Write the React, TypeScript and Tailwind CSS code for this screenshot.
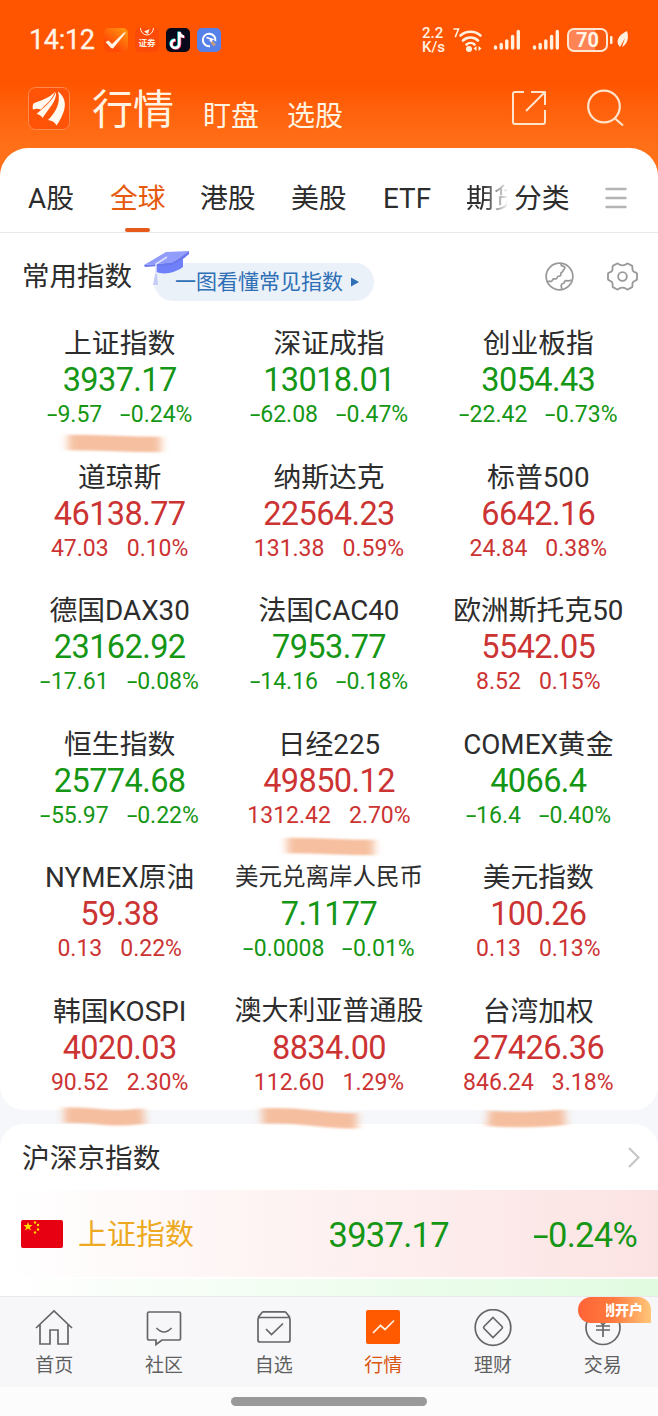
import React from "react";
import clsx from "clsx";

type Quote = {
  name: string;
  price: string;
  change: string;
  percent: string;
  up?: boolean;
  nameClass?: string;
};

const quotes: Quote[] = [
  { name: "上证指数", price: "3937.17", change: "-9.57", percent: "-0.24%" },
  { name: "深证成指", price: "13018.01", change: "-62.08", percent: "-0.47%" },
  { name: "创业板指", price: "3054.43", change: "-22.42", percent: "-0.73%" },
  { name: "道琼斯", price: "46138.77", change: "47.03", percent: "0.10%", up: true },
  { name: "纳斯达克", price: "22564.23", change: "131.38", percent: "0.59%", up: true },
  { name: "标普500", price: "6642.16", change: "24.84", percent: "0.38%", up: true },
  { name: "德国DAX30", price: "23162.92", change: "-17.61", percent: "-0.08%" },
  { name: "法国CAC40", price: "7953.77", change: "-14.16", percent: "-0.18%" },
  { name: "欧洲斯托克50", price: "5542.05", change: "8.52", percent: "0.15%", up: true },
  { name: "恒生指数", price: "25774.68", change: "-55.97", percent: "-0.22%" },
  { name: "日经225", price: "49850.12", change: "1312.42", percent: "2.70%", up: true },
  { name: "COMEX黄金", price: "4066.4", change: "-16.4", percent: "-0.40%" },
  { name: "NYMEX原油", price: "59.38", change: "0.13", percent: "0.22%", up: true },
  { name: "美元兑离岸人民币", price: "7.1177", change: "-0.0008", percent: "-0.01%", nameClass: "text-[23.5px]" },
  { name: "美元指数", price: "100.26", change: "0.13", percent: "0.13%", up: true },
  { name: "韩国KOSPI", price: "4020.03", change: "90.52", percent: "2.30%", up: true },
  { name: "澳大利亚普通股", price: "8834.00", change: "112.60", percent: "1.29%", up: true, nameClass: "text-[27px]" },
  { name: "台湾加权", price: "27426.36", change: "846.24", percent: "3.18%", up: true },
];

const SignalBars: React.FC = () => (
  <svg width="28" height="22" viewBox="0 0 28 22" stroke="#fff1e0" strokeWidth="3.4" strokeLinecap="round">
    <path d="M2.5 18v1M8.2 15.5v3.5M13.8 12v7M19.6 7.5v11.5M25.3 2.5v16.5" />
  </svg>
);

const StatusBar: React.FC = () => (
  <div className="flex h-20 items-center pl-[29px] pr-7">
    <span className="w-[75px] text-[27px] tracking-[-0.3px] text-[#fff4e6] [-webkit-text-stroke:0.3px]">14:12</span>
    <svg width="24" height="24" viewBox="0 0 24 24">
      <defs>
        <linearGradient id="check" x1="1" y1="0" x2="0.4" y2="0.8">
          <stop offset="0" stopColor="#ff9d10" />
          <stop offset="1" stopColor="#ff4a05" />
        </linearGradient>
      </defs>
      <rect width="24" height="24" rx="5" fill="url(#check)" />
      <path d="M1.5 14 4.5 12.5 8 16 20 4.5h2L9 20.5 7 20Z" fill="#fff4e6" />
    </svg>
    <div className="ml-[7px] flex h-6 w-6 flex-col items-center rounded-[5px] bg-[#fc4a08] text-[#fff0e0]">
      <svg width="16" height="9" viewBox="0 0 16 9" fill="none" stroke="currentColor">
        <path d="M1.5 0a6.5 7 0 0 0 13 0" />
        <path d="M5 3.5 10.5 1 9 6Z" fill="currentColor" stroke="none" />
      </svg>
      <span className="text-[8.5px] leading-[12px] font-bold">证券</span>
    </div>
    <svg className="ml-[7px]" width="24" height="24" viewBox="0 0 24 24" fill="none" strokeWidth="2.6">
      <rect width="24" height="24" rx="5" fill="#08091a" />
      <path d="M12.8 4v12a4 4 0 1 1-4-4M12.8 4c.5 3 2 4.5 4.8 4.7" stroke="#25e8e4" transform="translate(-.2 -.5)" />
      <path d="M12.8 4v12a4 4 0 1 1-4-4M12.8 4c.5 3 2 4.5 4.8 4.7" stroke="#fb3360" transform="translate(1.2 .5)" />
      <path d="M12.8 4v12a4 4 0 1 1-4-4M12.8 4c.5 3 2 4.5 4.8 4.7" stroke="#fff" transform="translate(.5 0)" />
    </svg>
    <svg className="ml-[7px]" width="24" height="24" viewBox="0 0 24 24" fill="none">
      <rect width="24" height="24" rx="5" fill="#5681e8" />
      <path d="M13 18.2a6.3 6.3 0 1 1 5.3-5" stroke="#fff" strokeWidth="2" />
      <path d="m9.5 9.5 6 2-2 1 2.5 2.5" stroke="#fff" strokeWidth="1.6" />
      <path d="m14.5 14 3.5 3.5" stroke="#c39a83" strokeWidth="3" />
    </svg>
    <div className="ml-auto flex flex-col text-[15px] leading-[14px] font-medium text-[#fff1e0]">
      <span>2.2</span>
      <span>K/s</span>
    </div>
    <svg className="ml-[7px]" width="31" height="26" viewBox="0 0 31 26" fill="none" stroke="#fff1e0" strokeWidth="2.6" strokeLinecap="round">
      <path d="M2 2h4.5L3.5 9.5" strokeWidth="1.6" />
      <path d="M8.5 8.5a15 15 0 0 1 20 0M11 13.5a11 11 0 0 1 15 0M14.5 17.5a6 6 0 0 1 8 0" />
      <circle cx="17" cy="22" r="3" fill="#fff1e0" stroke="none" />
      <path d="M24.5 19v5l-3-2.5ZM26.5 19v5l3-2.5Z" fill="#fff1e0" stroke="none" />
    </svg>
    <div className="ml-[10px] flex gap-[11px]">
      <SignalBars />
      <SignalBars />
    </div>
    <div className="ml-[7px] flex h-[24px] w-[41px] items-center justify-center rounded-[7px] border-2 border-[#ffe6d0] bg-gradient-to-r from-[#ff8455] from-70% to-[#f95a12] to-70% text-[20px] font-bold text-[#fff4e6]">
      70
    </div>
    <svg className="ml-0.5" width="20" height="20" viewBox="0 0 20 20" fill="#fff1e0">
      <rect y="6" width="2.5" height="8" rx="1" />
      <path d="M17 1c2 6 1 13-5 16l3-9-5 9C5 12 8 5 17 1Z" />
    </svg>
  </div>
);

const TitleBar: React.FC = () => (
  <div className="flex h-[68px] items-start pl-7 pr-[34px] text-[#fff4e2]">
    <svg className="mt-[7px]" width="42" height="43" viewBox="0 0 42 43">
      <rect x=".5" y=".5" width="41" height="42" rx="7" fill="#ff5408" stroke="#ff8a50" />
      <path d="M5.5 16.5C13 13 20 12 27 5c-3 8-9 12-14 17.5-3-1-5.5-1-8 0-.5-2-.5-4 .5-6ZM28 5c1 9-7 16-13.5 26-1-2-3-3.5-6-4C14 22 25 14 28 5ZM30 4.5c7 5 9 14 4.5 23-2 5-4 8-6 11-1.5-3-4-5-8.5-5.5C28 25 33 16 30 4.5Z" fill="#fff9ef" />
    </svg>
    <span className="ml-[22px] text-[41px] leading-[60px]">行情</span>
    <span className="ml-[29px] text-[28px] leading-[73px]">盯盘</span>
    <span className="ml-7 text-[28px] leading-[73px]">选股</span>
    <svg className="ml-auto mt-[11px]" width="34" height="34" viewBox="0 0 34 34" fill="none" stroke="#ffe3cb" strokeWidth="2" strokeLinejoin="round">
      <path d="M12 1H3a2 2 0 0 0-2 2v28a2 2 0 0 0 2 2h28a2 2 0 0 0 2-2V19M19 1h14v13M33 1 14 20" />
    </svg>
    <svg className="ml-[41px] mt-[9px]" width="37" height="38" viewBox="0 0 37 38" fill="none" stroke="#ffe3cb" strokeWidth="2.2">
      <circle cx="17" cy="17.5" r="15.8" />
      <path d="m27.5 29 8.5 7.5" />
    </svg>
  </div>
);

const Tabs: React.FC = () => (
  <div className="flex h-[85px] items-center border-b border-[#e8e9ec] pt-[18px] pr-[31px] pl-7 text-[27.8px] whitespace-nowrap text-[#2d2d2d]">
    <span className="w-[82px]">A股</span>
    <div className="relative w-[90px] text-[#e65a10]">
      全球
      <span className="absolute -bottom-[12px] left-[15px] h-1 w-[25px] rounded-full bg-[#e65a1c]" />
    </div>
    <span className="w-[91px]">港股</span>
    <span className="w-[92px]">美股</span>
    <span className="w-[83px]">ETF</span>
    <span className="w-[41px] overflow-hidden bg-gradient-to-r from-[#2d2d2d] from-40% to-[#eeeeee] bg-clip-text text-transparent">期货</span>
    <span className="ml-[7px]">分类</span>
    <svg className="-mt-[3px] ml-auto" width="22" height="22" viewBox="0 0 22 22" stroke="#b4b4b4" strokeWidth="2.4" strokeLinecap="round">
      <path d="M1.5 2h19M1.5 11h19M1.5 20h19" />
    </svg>
  </div>
);

const SectionHeader: React.FC = () => (
  <div className="flex h-[86px] items-center pr-5 pl-[22px]">
    <h2 className="pt-[2px] text-[27.5px] text-[#2d2d2d]">常用指数</h2>
    <div className="relative mt-3 ml-[22px] flex h-[38px] w-[220px] items-center rounded-full bg-[#eaf1f9] pl-[21px] text-[21px] text-[#2f6fb5]">
      <span className="pt-[2px]">一图看懂常见指数</span>
      <svg className="ml-2" width="8" height="10" viewBox="0 0 8 10" fill="#2f6fb5">
        <path d="M0 .5 8 5 0 9.5Z" />
      </svg>
      <svg className="absolute -top-[13px] -left-[10px]" width="46" height="36" viewBox="0 0 46 36">
        <path d="M12 15v7c8 3 19 1 27-5V9Z" fill="#7080fb" />
        <path d="M0 15 22 2l23-1-17 12Z" fill="#929dfb" />
        <path d="M0 15 28 13 45 1v3C39 10 32 13 28 15L1 17Z" fill="#6a78ee" />
        <path d="M23 7 12 14v12" fill="none" stroke="#dfe3ff" strokeWidth="1.5" />
        <path d="m11 24-2 11h5l-1-11Z" fill="#c5cdf6" />
      </svg>
    </div>
    <svg className="ml-auto" width="29" height="29" viewBox="0 0 30 30" fill="none" stroke="#999" strokeWidth="1.8" strokeLinejoin="round">
      <circle cx="15" cy="15" r="13.8" />
      <path d="M17 1.500c-1 2 0 2.500 2 3s2 2 .5 3.500-1 2.500-2.500 3 .5 3.500-2 3.500-2 .5-2.500 2-2 .5-3.500 1-1 2-2.500 2.500H2.500M17 28.500c1-2-1-3 0-5s2.500-.5 3-2.500 2-2 3.500-1.500 2-1 4-.5" />
    </svg>
    <svg className="ml-[33px]" width="31" height="29" viewBox="0 0 32 30" fill="none" stroke="#999" strokeWidth="1.9" strokeLinejoin="round">
      <path d="M10.5 1.5c1.500 0 2.500 2 5.500 2s4-2 5.500-2l4.500 2.500c.8 1-.5 3 .8 5s3.700 1.500 4.200 3v6c-.5 1.500-3 1-4.200 3s0 4-.8 5l-4.500 2.500c-1.500 0-2.500-2-5.500-2s-4 2-5.500 2L6 26c-.8-1 .5-3-.8-5S1.500 19.500 1 18v-6c.5-1.500 3-1 4.200-3s0-4 .8-5Z" />
      <circle cx="16" cy="15" r="4.5" />
    </svg>
  </div>
);

// Figures are set with a minus sign wider than the font's own hyphen
const Figure: React.FC<{ value: string }> = ({ value }) =>
  value.startsWith("-") ? (
    <span>
      <span className="mr-[0.18em] inline-block origin-left scale-x-165">-</span>
      {value.slice(1)}
    </span>
  ) : (
    <span>{value}</span>
  );

const QuoteCell: React.FC<{ quote: Quote }> = ({ quote }) => (
  <div className="flex h-[133.5px] flex-col items-center whitespace-nowrap">
    <span className={clsx("h-[38px] leading-[39px] text-[#2d2d2d]", quote.nameClass ?? "text-[27.8px]")}>{quote.name}</span>
    <div className={clsx("flex flex-col items-center font-[Roboto]", quote.up ? "text-[#cc3333]" : "text-[#159615]")}>
      <span className="text-[32.5px] leading-[36px] tracking-[-0.6px]">{quote.price}</span>
      <div className="flex gap-[18px] text-[23px] leading-[33px]">
        <Figure value={quote.change} />
        <Figure value={quote.percent} />
      </div>
    </div>
  </div>
);

// Highlighter strokes laid over the quotes
const Marks: React.FC = () => (
  <svg className="pointer-events-none absolute top-0 left-0" width="658" height="1416" viewBox="0 0 658 1416" fill="none" stroke="#f5b48f" strokeOpacity=".85" strokeWidth="15.5">
    <defs>
      <filter id="soft" filterUnits="userSpaceOnUse" x="0" y="0" width="658" height="1416">
        <feGaussianBlur stdDeviation="4 1" />
      </filter>
    </defs>
    <g filter="url(#soft)">
      <path d="M68 442.5q24 0 47 1t46 1" />
      <path d="M287 845.5q22 0 44 1t43 1" />
      <path d="M64 1115q22 0 38 2t42-1" />
      <path d="M262 1116q25-1 50 2t45 3" />
      <path d="M488 1118q16 2 38 1.500t39-2.500" />
    </g>
  </svg>
);

const ShanghaiCard: React.FC = () => (
  <div className="mt-[14px] h-[172px] overflow-hidden rounded-t-[24px] bg-white">
    <div className="flex h-[66px] items-center justify-between pr-[18px] pl-[22px]">
      <h2 className="pt-1 text-[27.7px] text-[#2d2d2d]">沪深京指数</h2>
      <svg width="12" height="21" viewBox="0 0 12 21" fill="none" stroke="#c6c6c6" strokeWidth="2.2">
        <path d="m1 1 9.500 9.500L1 20" />
      </svg>
    </div>
    <div className="flex h-[87px] items-center bg-gradient-to-r from-white to-[#fce3e3] px-[21px]">
      <svg width="42" height="28" viewBox="0 0 42 28">
        <rect width="42" height="28" rx="2" fill="#e60012" />
        <g fill="#ffde00">
          <path d="m7 2 1.200 3.100h3.300L8.900 7.200l1 3.300L7 8.600l-2.900 1.900 1-3.300-2.600-2.100h3.300Z" />
          <circle cx="14" cy="2.5" r="1.2" />
          <circle cx="17" cy="5" r="1.2" />
          <circle cx="17" cy="9.5" r="1.2" />
          <circle cx="14" cy="12.5" r="1.2" />
        </g>
      </svg>
      <span className="ml-[15px] pt-[5px] text-[29px] text-[#eda921]">上证指数</span>
      <div className="ml-auto flex pt-1 font-[Roboto] text-[34.5px] tracking-[-0.7px] text-[#159615]">
        <span>3937.17</span>
        <span className="w-[188px] text-right">
          <Figure value="-0.24%" />
        </span>
      </div>
    </div>
    <div className="mt-[2px] h-[17px] bg-gradient-to-r from-white to-[#e0fbe0]" />
  </div>
);

const navItems = [
  { label: "首页", icon: <path d="M1 19 19 2l18 17M5 15.500V35h10V21h8v14h10V15.500" /> },
  { label: "社区", icon: <path d="M4 3h30a1.500 1.500 0 0 1 1.500 1.500v25A1.500 1.500 0 0 1 34 31H17l-6 4.500V31H4a1.500 1.500 0 0 1-1.500-1.500v-25A1.500 1.500 0 0 1 4 3ZM11.500 19q7.500 8 15 0" /> },
  { label: "自选", icon: <path d="M3 8.500 7 3.500a2 2 0 0 1 1.500-.7h21a2 2 0 0 1 1.500.7l4 5M5 8.500h28a2 2 0 0 1 2 2V31a2 2 0 0 1-2 2H5a2 2 0 0 1-2-2V10.500a2 2 0 0 1 2-2ZM11 20l5.500 5.500L28 14.500" /> },
  { label: "行情", active: true, icon: <><rect x="2" y="1" width="34" height="34" rx="2" fill="#ff5a00" stroke="none" /><path d="m9 24 7.500-7.500 4.500 4 9-9" stroke="#fff3e4" /></> },
  { label: "理财", icon: <><circle cx="19" cy="18.5" r="17.8" /><path d="m19 8.500 9 9a1.500 1.500 0 0 1 0 2l-9 9-9-9a1.500 1.500 0 0 1 0-2Z" /></> },
  { label: "交易", icon: <><circle cx="19" cy="18.5" r="17" /><path d="m13 9 6 7 6-7M12 17h14M12 21h14M19 16v12" /></> },
];

const BottomNav: React.FC = () => (
  <nav className="relative grid h-[91px] grid-cols-6 border-t border-[#e9e9ec] bg-[#f7f7fa]">
    {navItems.map((item) => (
      <div key={item.label} className={clsx("flex flex-col items-center pt-3 pr-px", item.active ? "text-[#d9540f]" : "text-[#5f5f5f]")}>
        <svg width="38" height="38" viewBox="0 0 38 38" fill="none" stroke="#666" strokeWidth="1.7">
          {item.icon}
        </svg>
        <span className="mt-[5px] text-[19px] leading-[28px]">{item.label}</span>
      </div>
    ))}
    <div className="absolute top-0 right-[7px] flex h-[26px] w-[73px] items-center justify-end rounded-full rounded-br-lg bg-gradient-to-r from-[#ff6337] via-[#ff7b3e] to-[#ffc67a] pr-[8px] text-[14px] font-black text-white">
      <span className="flex w-[9px] justify-end overflow-hidden">划</span>
      <span>开户</span>
    </div>
  </nav>
);

const App: React.FC = () => {
  return (
    <div className="relative h-[1416px] w-[658px] overflow-hidden bg-[#f5f7fa] font-[Roboto,'Noto_Sans_CJK_SC',sans-serif]">
      <div className="bg-gradient-to-b from-[#ff5500] from-45% to-[#ff7018] to-80%">
        <StatusBar />
        <TitleBar />
        <div className="h-9" />
      </div>
      <main className="-mt-9 h-[962px] rounded-t-[28px] rounded-b-[24px] bg-white">
        <Tabs />
        <SectionHeader />
        <div className="grid grid-cols-3 px-[15px] pt-[5px]">
          {quotes.map((quote) => (
            <QuoteCell key={quote.name} quote={quote} />
          ))}
        </div>
      </main>
      <ShanghaiCard />
      <BottomNav />
      <div className="flex h-[29px] justify-center bg-[#fcfcfc] pt-[10px]">
        <div className="h-[9px] w-[196px] rounded-full bg-[#999]" />
      </div>
      <Marks />
    </div>
  );
};

export default App;
